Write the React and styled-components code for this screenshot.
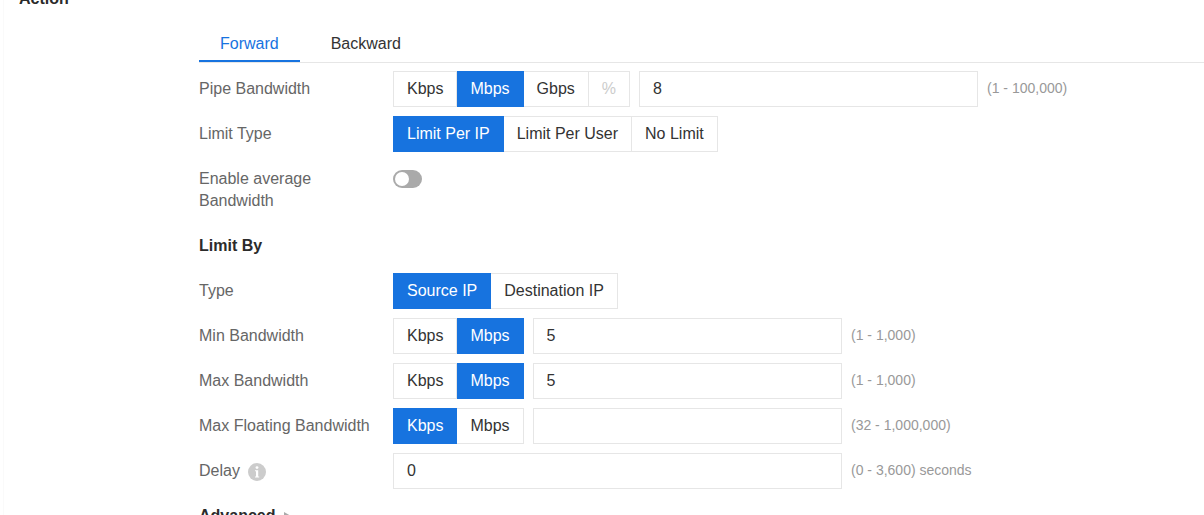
import React, { useState } from "react";
import styled, { createGlobalStyle } from "styled-components";

const blue = "#1773df";
const line = "#e6e6e6";

const GlobalStyle = createGlobalStyle`
  * { box-sizing: border-box; }
  body {
    margin: 0;
    background: #fff;
    color: #333;
    font: 16px/22px "Liberation Sans", Arial, sans-serif;
    overflow: hidden;
  }
  button, input { font: inherit; color: inherit; }
`;

const Page = styled.main`
  margin-left: 3px;
  padding-left: 15px;
  border-left: 1px solid #fafafa;
`;

const SectionHeader = styled.header`
  display: flex;
  align-items: flex-end;
  height: 10px;
  overflow: hidden;
`;

const Heading = styled.h2`
  margin: 0;
  padding: ${(p) => (p.$inForm ? "7px 0" : "0")};
  font-size: 16px;
  line-height: 22px;
  font-weight: bold;
  color: #2b2b2b;
`;

const Panel = styled.section`
  padding: 15px 0 0 180px;
`;

const TabList = styled.div`
  display: flex;
  gap: 10px;
  border-bottom: 1px solid ${line};
`;

const Tab = styled.button`
  height: 37px;
  padding: 2px 21px 0;
  border: 0;
  border-bottom: 2px solid ${(p) => (p.$active ? blue : "transparent")};
  background: none;
  color: ${(p) => (p.$active ? blue : "#333")};
  cursor: pointer;
`;

const Form = styled.form`
  display: flex;
  flex-direction: column;
  gap: 9px;
  padding-top: 8px;
`;

const Row = styled.div`
  display: flex;
  min-height: 36px;
`;

const Label = styled.label`
  flex: 0 0 194px;
  padding: 7px ${(p) => (p.$narrow ? 64 : 16)}px 7px 0;
  color: #666;
`;

const LabelWithIcon = styled.div`
  display: flex;
  flex: 0 0 194px;
  align-items: center;
  gap: 8px;
  color: #666;

  svg { display: block; margin-top: 2px; }
`;

const Control = styled.div`
  display: flex;
  flex: 0 1 ${(p) => (p.$wide ? 585 : 449)}px;
  min-width: 0;
  gap: 9px;
`;

const Group = styled.div`
  display: flex;
  flex: none;
`;

const Segment = styled.button`
  height: 36px;
  padding: 0 13px;
  border: 1px solid ${(p) => (p.$active ? blue : line)};
  border-left-width: 0;
  background: ${(p) => (p.$active ? blue : "#fff")};
  color: ${(p) => (p.$active ? "#fff" : "#333")};
  white-space: nowrap;
  cursor: pointer;

  &:first-child {
    border-left-width: 1px;
  }
  &:disabled {
    color: #ccc;
    cursor: default;
  }
`;

const TextBox = styled.input`
  flex: 1;
  min-width: 0;
  height: 36px;
  padding: 0 13px;
  border: 1px solid ${line};
  border-radius: 0;
  background: #fff;
  outline: none;

  &:focus { border-color: ${blue}; }
`;

const Hint = styled.span`
  padding: 6px 0 0 9px;
  font-size: 14px;
  color: #999;
  white-space: nowrap;
`;

const Switch = styled.input`
  display: flex;
  align-items: center;
  appearance: none;
  width: 29px;
  height: 18px;
  margin: 9px 0 0;
  padding: 0 2px;
  border-radius: 9px;
  background: #aaa;
  cursor: pointer;

  &::before {
    content: "";
    width: 14px;
    height: 14px;
    border-radius: 50%;
    background: #fff;
  }
  &:checked {
    justify-content: flex-end;
    background: ${blue};
  }
`;

const Disclosure = styled.button`
  display: flex;
  align-items: center;
  align-self: flex-start;
  gap: 9px;
  padding: 7px 0;
  border: 0;
  background: none;
  font-weight: bold;
  color: #2b2b2b;
  cursor: pointer;
`;

function InfoIcon() {
  return (
    <svg width="18" height="18" viewBox="0 0 18 18" role="img" aria-label="Information">
      <circle cx="9" cy="9" r="9" fill="#ccc" />
      <circle cx="9" cy="4.6" r="1.4" fill="#fff" />
      <path d="M7 7.2h3.2v6.2h1v1.1H7v-1.1h1V8.3H7z" fill="#fff" />
    </svg>
  );
}

function Segments({ label, options, initial, disabled }) {
  const [value, setValue] = useState(initial);
  return (
    <Group role="group" aria-label={label}>
      {options.map((option) => (
        <Segment
          key={option}
          type="button"
          $active={option === value}
          aria-pressed={option === value}
          disabled={option === disabled}
          onClick={() => setValue(option)}
        >
          {option}
        </Segment>
      ))}
    </Group>
  );
}

function BandwidthRow({ id, label, options, unit, disabled, value, hint, wide }) {
  return (
    <Row>
      <Label htmlFor={id}>{label}</Label>
      <Control $wide={wide}>
        <Segments label={label + " unit"} options={options} initial={unit} disabled={disabled} />
        <TextBox id={id} defaultValue={value} />
      </Control>
      <Hint>{hint}</Hint>
    </Row>
  );
}

function ChoiceRow({ label, options, initial }) {
  return (
    <Row>
      <Label as="span">{label}</Label>
      <Segments label={label} options={options} initial={initial} />
    </Row>
  );
}

const units = ["Kbps", "Mbps"];

export default function App() {
  const [tab, setTab] = useState("Forward");
  return (
    <Page>
      <GlobalStyle />
      <SectionHeader>
        <Heading>Action</Heading>
      </SectionHeader>
      <Panel>
        <TabList role="tablist">
          {["Forward", "Backward"].map((name) => (
            <Tab
              key={name}
              type="button"
              role="tab"
              aria-selected={tab === name}
              $active={tab === name}
              onClick={() => setTab(name)}
            >
              {name}
            </Tab>
          ))}
        </TabList>
        <Form>
          <BandwidthRow id="pipe" label="Pipe Bandwidth" options={["Kbps", "Mbps", "Gbps", "%"]} unit="Mbps" disabled="%" value="8" hint="(1 - 100,000)" wide />
          <ChoiceRow label="Limit Type" options={["Limit Per IP", "Limit Per User", "No Limit"]} initial="Limit Per IP" />
          <Row>
            <Label htmlFor="average" $narrow>Enable average Bandwidth</Label>
            <Switch id="average" type="checkbox" role="switch" />
          </Row>
          <Heading $inForm>Limit By</Heading>
          <ChoiceRow label="Type" options={["Source IP", "Destination IP"]} initial="Source IP" />
          <BandwidthRow id="min" label="Min Bandwidth" options={units} unit="Mbps" value="5" hint="(1 - 1,000)" />
          <BandwidthRow id="max" label="Max Bandwidth" options={units} unit="Mbps" value="5" hint="(1 - 1,000)" />
          <BandwidthRow id="floating" label="Max Floating Bandwidth" options={units} unit="Kbps" value="" hint="(32 - 1,000,000)" />
          <Row>
            <LabelWithIcon>
              <label htmlFor="delay">Delay</label>
              <InfoIcon />
            </LabelWithIcon>
            <Control>
              <TextBox id="delay" defaultValue="0" />
            </Control>
            <Hint>(0 - 3,600) seconds</Hint>
          </Row>
          <Disclosure type="button" aria-expanded="false">
            Advanced
            <svg width="7" height="8" viewBox="0 0 7 8" aria-hidden="true">
              <path d="M0 0l7 4-7 4z" fill="#aaa" />
            </svg>
          </Disclosure>
        </Form>
      </Panel>
    </Page>
  );
}
